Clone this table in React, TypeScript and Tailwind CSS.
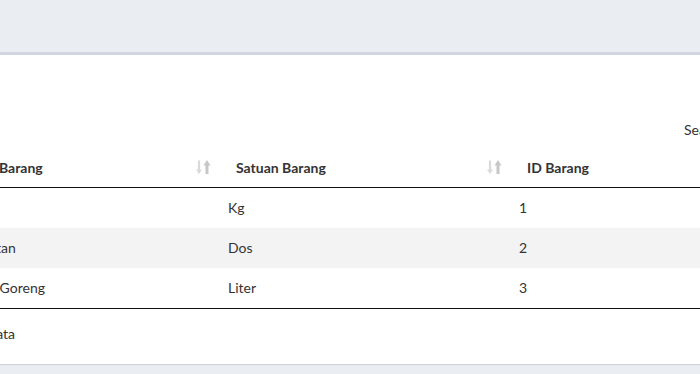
import React from 'react';

interface Barang {
  id: number;
  nama: string;
  satuan: string;
}

const barangList: Barang[] = [
  { id: 1, nama: 'Beras', satuan: 'Kg' },
  { id: 2, nama: 'Mie Instan', satuan: 'Dos' },
  { id: 3, nama: 'Minyak Goreng', satuan: 'Liter' },
];

// sort indicator (both directions), down arrow left, up arrow right
function SortBoth() {
  return (
    <svg width="18" height="18" viewBox="0 0 18 18" className="shrink-0">
      <path d="M4 2.5v10" stroke="#d9d9d9" strokeWidth="2.2" />
      <path d="M1 11.5h6L4 16z" fill="#d9d9d9" />
      <path d="M12 16V6" stroke="#c6c6c6" strokeWidth="3" />
      <path d="M8.5 7.5h7L12 2z" fill="#c6c6c6" />
    </svg>
  );
}

export default function App() {
  return (
    <div className="w-[700px] h-[374px] overflow-hidden bg-[#eaedf2] font-['Lato',sans-serif] text-[14px] text-[#333]">
      <div className="h-[52px]" />

      <div className="h-[312px] bg-white border-t-[3px] border-[#d2d6de] shadow-[0_1px_1px_rgba(0,0,0,0.1)] overflow-hidden">
        <div className="h-[60px]" />

        <div className="h-[28px] flex items-center pl-[684px] pt-[1px]">
          <label className="whitespace-nowrap">Search:</label>
        </div>

        <div className="h-[4px]" />

        <div className="ml-[-59px] w-[900px]">
          <div className="flex h-[41px] border-b border-[#111] font-bold">
            <div className="w-[277px] flex items-center justify-between pl-[18px] pr-[5px]">
              <span className="whitespace-nowrap">Nama Barang</span>
              <SortBoth />
            </div>
            <div className="w-[291px] flex items-center justify-between pl-[18px] pr-[5px]">
              <span>Satuan Barang</span>
              <SortBoth />
            </div>
            <div className="flex-1 flex items-center pl-[18px]">
              <span>ID Barang</span>
            </div>
          </div>

          {barangList.map((b, i) => (
            <div
              key={b.id}
              className={`flex h-[40px] items-center pb-[1px] ${i % 2 === 1 ? 'bg-[#f3f3f3]' : 'bg-white'}`}
            >
              <div className="w-[277px] pl-[10px] whitespace-nowrap">{b.nama}</div>
              <div className="w-[291px] pl-[10px]">{b.satuan}</div>
              <div className="flex-1 pl-[10px]">{b.id}</div>
            </div>
          ))}

          <div className="border-t border-[#111]" />
        </div>

        <div className="h-[50px] flex items-center pb-[2px]">
          <div className="w-[15px] flex justify-end">
            <span className="whitespace-nowrap">Menampilkan 1 sampai 3 dari 3 data</span>
          </div>
        </div>
      </div>
    </div>
  );
}
